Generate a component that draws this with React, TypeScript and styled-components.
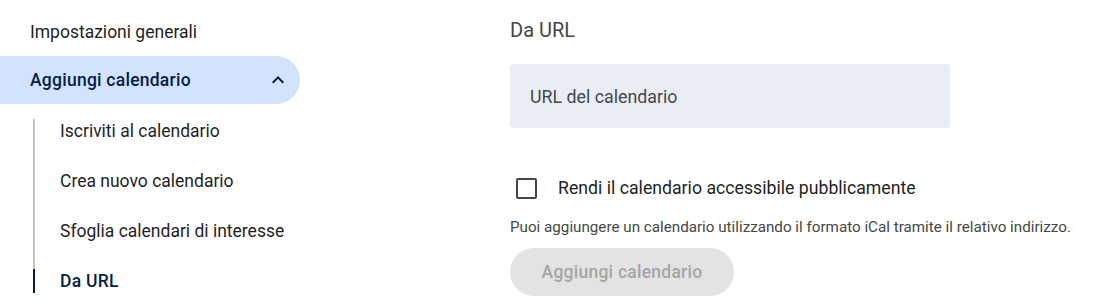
import React from "react";
import styled, { createGlobalStyle } from "styled-components";

const Global = createGlobalStyle`
  html, body { margin: 0; padding: 0; background: #fff; }
  body { font-family: Roboto, "Noto Sans", Arial, sans-serif; color: #1f1f1f; }
  * { box-sizing: border-box; }
`;

const Page = styled.div`
  display: flex;
  width: 1108px;
  height: 306px;
  overflow: hidden;
`;

const Nav = styled.nav`
  width: 300px;
  flex: none;
  padding-top: 8px;
  display: flex;
  flex-direction: column;
`;

const NavItem = styled.div<{ $active?: boolean }>`
  height: 48px;
  display: flex;
  align-items: center;
  justify-content: space-between;
  padding: 0 10px 0 30px;
  font-size: 17.5px;
  letter-spacing: ${(p) => (p.$active ? "0.25px" : "0")};
  border-radius: 0 24px 24px 0;
  color: ${(p) => (p.$active ? "#041e49" : "#1f1f1f")};
  font-weight: ${(p) => (p.$active ? 500 : 400)};
  background: ${(p) => (p.$active ? "#d3e3fd" : "transparent")};
`;

const SubList = styled.div`
  position: relative;
  margin-top: 2px;
  display: flex;
  flex-direction: column;
  &::before {
    content: "";
    position: absolute;
    left: 33px;
    top: 13px;
    bottom: 13px;
    width: 2px;
    background: #c4c7c5;
  }
`;

const SubItem = styled.div<{ $active?: boolean }>`
  position: relative;
  height: 50px;
  display: flex;
  align-items: center;
  padding-left: 60px;
  font-size: 17.5px;
  letter-spacing: ${(p) => (p.$active ? "0.25px" : "0")};
  color: ${(p) => (p.$active ? "#041e49" : "#1f1f1f")};
  font-weight: ${(p) => (p.$active ? 500 : 400)};
  &::before {
    content: "";
    display: ${(p) => (p.$active ? "block" : "none")};
    position: absolute;
    left: 33px;
    top: 13px;
    bottom: 13px;
    width: 2px;
    background: #041e49;
  }
`;

const Main = styled.main`
  margin-left: 210px;
  padding-top: 18px;
  display: flex;
  flex-direction: column;
  align-items: flex-start;
`;

const Heading = styled.h2`
  margin: 0;
  font-size: 20px;
  font-weight: 400;
  line-height: 24px;
  color: #444746;
`;

const UrlField = styled.div`
  margin-top: 22px;
  width: 440px;
  height: 64px;
  border-radius: 4px;
  background: #e9eef6;
  display: flex;
  align-items: center;
  padding-left: 20px;
  font-size: 17.8px;
  color: #444746;
`;

const CheckRow = styled.label`
  margin-top: 40px;
  height: 40px;
  display: flex;
  align-items: center;
  gap: 21px;
  padding-left: 6px;
  font-size: 17.7px;
  color: #1f1f1f;
`;

const Box = styled.span`
  width: 21px;
  height: 21px;
  border: 2px solid #444746;
  border-radius: 2px;
  flex: none;
`;

const Help = styled.p`
  margin: 9px 0 0;
  font-size: 15.2px;
  line-height: 20px;
  color: #444746;
`;

const Button = styled.button`
  margin-top: 11px;
  height: 48px;
  width: 224px;
  border: none;
  border-radius: 24px;
  background: #e3e3e3;
  color: #a5a5a5;
  font-family: inherit;
  font-size: 17.5px;
  font-weight: 500;
  letter-spacing: 0.25px;
  display: flex;
  align-items: center;
  justify-content: center;
`;

const Chevron = () => (
  <svg width="24" height="24" viewBox="0 0 24 24" fill="#041e49">
    <path d="M12 8l-6 6 1.41 1.41L12 10.83l4.59 4.58L18 14z" />
  </svg>
);

export default function App() {
  return (
    <>
      <Global />
      <Page>
        <Nav>
          <NavItem>Impostazioni generali</NavItem>
          <NavItem $active>
            Aggiungi calendario
            <Chevron />
          </NavItem>
          <SubList>
            <SubItem>Iscriviti al calendario</SubItem>
            <SubItem>Crea nuovo calendario</SubItem>
            <SubItem>Sfoglia calendari di interesse</SubItem>
            <SubItem $active>Da URL</SubItem>
          </SubList>
        </Nav>
        <Main>
          <Heading>Da URL</Heading>
          <UrlField>URL del calendario</UrlField>
          <CheckRow>
            <Box />
            Rendi il calendario accessibile pubblicamente
          </CheckRow>
          <Help>
            Puoi aggiungere un calendario utilizzando il formato iCal tramite il relativo indirizzo.
          </Help>
          <Button disabled>Aggiungi calendario</Button>
        </Main>
      </Page>
    </>
  );
}
